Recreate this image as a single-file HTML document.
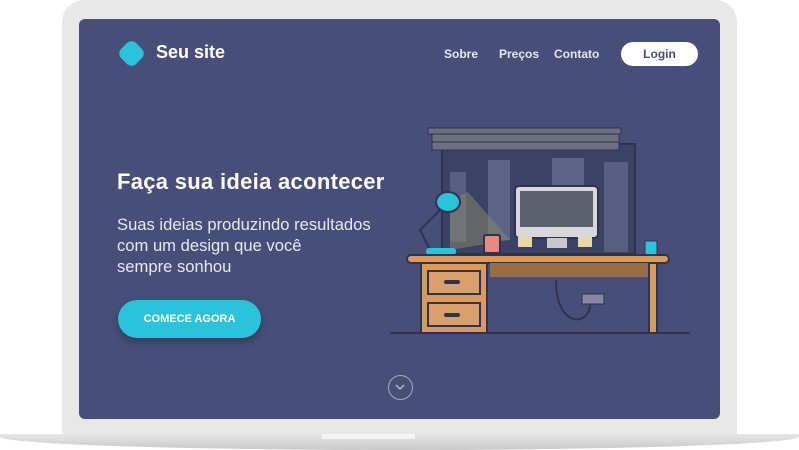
<!DOCTYPE html>
<html><head><meta charset="utf-8"><style>
*{margin:0;padding:0;box-sizing:border-box}
body{width:799px;height:450px;background:#fff;position:relative;overflow:hidden;font-family:"Liberation Sans",sans-serif}
.lid{position:absolute;left:62px;top:0;width:675px;height:440px;background:#e8e8e8;border-radius:22px 22px 0 0}
.screen{position:absolute;left:79px;top:19px;width:641px;height:400px;background:#474e78;border-radius:6px;overflow:hidden;color:#fff}
.base{position:absolute;left:0;top:434px;width:799px;height:16px;background:linear-gradient(#e6e6e6,#c8c8c8);border-radius:0 0 60% 60%/0 0 100% 100%}
.notch{position:absolute;top:434px;width:93px;height:5px;background:#f4f4f4;left:322px}
.logo{position:absolute;left:40px;top:22px;width:25px;height:25px;background:#2ac3d9;border-radius:8px;transform:rotate(45deg) scale(.85)}
.brand{position:absolute;left:77px;top:23px;font-size:18px;font-weight:bold}
.nav{position:absolute;top:28px;font-size:12px;font-weight:bold;color:#e4e6f0}
.login{position:absolute;left:542px;top:23px;width:77px;height:24px;background:#fff;border-radius:12px;color:#474e78;font-size:12px;font-weight:bold;text-align:center;line-height:24px}
h1{position:absolute;left:38px;top:150px;font-size:22px;letter-spacing:.3px;font-weight:bold}
.sub{position:absolute;left:38px;top:195px;font-size:16.6px;line-height:21px;color:#e6e8f2}
.btn{position:absolute;left:39px;top:281px;width:143px;height:38px;background:#2ac3d9;border-radius:19px;font-size:11px;font-weight:bold;text-align:center;line-height:38px;box-shadow:0 4px 8px rgba(0,0,0,.25)}
.down{position:absolute;left:309px;top:356px;width:25px;height:25px;border:1.5px solid #a6aac4;border-radius:50%}
</style></head><body>
<div class="lid"></div>
<div class="base"></div><div class="notch"></div>
<div class="screen">
<div class="logo"></div>
<div class="brand">Seu site</div>
<div class="nav" style="left:365px">Sobre</div>
<div class="nav" style="left:420px">Preços</div>
<div class="nav" style="left:475px">Contato</div>
<div class="login">Login</div>
<h1>Faça sua ideia acontecer</h1>
<div class="sub">Suas ideias produzindo resultados<br>com um design que você<br>sempre sonhou</div>
<div class="btn">COMECE AGORA</div>
<div class="down"><svg width="22" height="22" viewBox="0 0 22 22"><path d="M7 9l4 4 4-4" stroke="#a6aac4" stroke-width="1.6" fill="none"/></svg></div>
<svg style="position:absolute;left:311px;top:101px" width="320" height="220" viewBox="0 0 320 220">
<rect x="52" y="24" width="193" height="110" fill="#3b4266" stroke="#2e3350" stroke-width="2"/>
<rect x="98" y="40" width="22" height="80" fill="#5d6384"/>
<rect x="162" y="38" width="32" height="30" fill="#5d6384"/>
<rect x="214" y="42" width="24" height="90" fill="#585e80"/>
<rect x="60" y="52" width="16" height="70" fill="#585e80"/>
<rect x="38" y="8" width="193" height="6" fill="#6b6f80" stroke="#2e3350"/>
<rect x="42" y="14" width="187" height="8" fill="#6b6f80" stroke="#2e3350"/>
<rect x="42" y="22" width="187" height="8" fill="#6b6f80" stroke="#2e3350"/>
<path d="M60 80 L78 72 L120 120 L60 130Z" fill="#8a8a6a" opacity=".5"/>
<rect x="125" y="66" width="83" height="52" rx="4" fill="#d8d8dc" stroke="#2e3350" stroke-width="2"/>
<rect x="130" y="71" width="73" height="36" fill="#5c5f6e"/>
<rect x="157" y="118" width="20" height="10" fill="#c8c8cc"/>
<rect x="94" y="115" width="16" height="18" rx="2" fill="#e98a7c" stroke="#2e3350" stroke-width="2"/>
<rect x="128" y="117" width="14" height="10" fill="#e8d9a0"/>
<rect x="188" y="117" width="14" height="10" fill="#e8d9a0"/>
<path d="M40 130 L30 110 L50 90" stroke="#2e3350" stroke-width="2" fill="none"/>
<ellipse cx="58" cy="82" rx="12" ry="10" fill="#2ac3d9" stroke="#2e3350" stroke-width="2"/>
<rect x="36" y="128" width="30" height="7" rx="3" fill="#2ac3d9"/>
<rect x="255" y="121" width="12" height="14" fill="#2ac3d9" stroke="#2e3350"/>
<rect x="17" y="135" width="262" height="8" rx="4" fill="#d99a5c" stroke="#2e3350" stroke-width="2"/>
<rect x="100" y="143" width="160" height="14" fill="#9b6d45"/>
<rect x="31" y="143" width="66" height="70" fill="#d99a5c" stroke="#2e3350" stroke-width="2"/>
<rect x="38" y="151" width="52" height="23" fill="#d9a06a" stroke="#2e3350" stroke-width="2"/>
<rect x="38" y="183" width="52" height="23" fill="#d9a06a" stroke="#2e3350" stroke-width="2"/>
<rect x="54" y="160" width="16" height="4" rx="2" fill="#2e3350"/>
<rect x="54" y="193" width="16" height="4" rx="2" fill="#2e3350"/>
<rect x="259" y="143" width="8" height="70" fill="#d99a5c" stroke="#2e3350" stroke-width="2"/>
<path d="M166 160 C166 210 200 205 200 185" stroke="#2e3350" stroke-width="2" fill="none"/>
<rect x="192" y="174" width="22" height="10" fill="#858aa0" stroke="#2e3350"/>
<line x1="0" y1="213" x2="300" y2="213" stroke="#2e3350" stroke-width="2"/>
</svg>
</div>
</body></html>
